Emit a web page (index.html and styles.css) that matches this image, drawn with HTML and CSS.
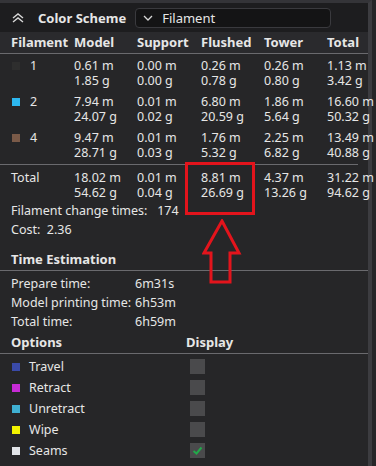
FILE: index.html
```html
<!DOCTYPE html>
<html lang="en">
<head>
  <meta charset="UTF-8" />
  <title>Color Scheme</title>
  <link rel="stylesheet" href="styles.css">
</head>
<body>
  <div class="panel">
    <div class="topbar">
      <svg class="collapse" width="12" height="10" viewBox="0 0 12 10">
        <path d="M1 5 L6 1 L11 5 M1 9 L6 5 L11 9" fill="none" stroke="#d8d8d8" stroke-width="1.4"/>
      </svg>
      <span class="title">Color Scheme</span>
      <div class="dropdown">
        <svg width="10" height="6" viewBox="0 0 10 6">
          <path d="M1 1 L5 5 L9 1" fill="none" stroke="#d8d8d8" stroke-width="1.3"/>
        </svg>
        <span>Filament</span>
      </div>
    </div>

    <div class="grid head">
      <span>Filament</span><span>Model</span><span>Support</span><span>Flushed</span><span>Tower</span><span>Total</span>
    </div>

    <div class="rows">
      <div class="grid row">
        <span class="fil"><i class="sw" style="background:#2e2e2e"></i>1</span>
        <span>0.61 m<br>1.85 g</span><span>0.00 m<br>0.00 g</span><span>0.26 m<br>0.78 g</span><span>0.26 m<br>0.80 g</span><span>1.13 m<br>3.42 g</span>
      </div>
      <div class="grid row">
        <span class="fil"><i class="sw" style="background:#2db7ef"></i>2</span>
        <span>7.94 m<br>24.07 g</span><span>0.01 m<br>0.02 g</span><span>6.80 m<br>20.59 g</span><span>1.86 m<br>5.64 g</span><span>16.60 m<br>50.32 g</span>
      </div>
      <div class="grid row">
        <span class="fil"><i class="sw" style="background:#7a5a48"></i>4</span>
        <span>9.47 m<br>28.71 g</span><span>0.01 m<br>0.03 g</span><span>1.76 m<br>5.32 g</span><span>2.25 m<br>6.82 g</span><span>13.49 m<br>40.88 g</span>
      </div>
    </div>

    <div class="grid row total">
      <span>Total</span>
      <span>18.02 m<br>54.62 g</span><span>0.01 m<br>0.04 g</span><span>8.81 m<br>26.69 g</span><span>4.37 m<br>13.26 g</span><span>31.22 m<br>94.62 g</span>
    </div>

    <div class="info">
      <p>Filament change times:&nbsp;&nbsp; 174</p>
      <p>Cost:&nbsp;&nbsp;2.36</p>
    </div>

    <div class="section">Time Estimation</div>
    <div class="times">
      <p><span>Prepare time:</span><span>6m31s</span></p>
      <p><span>Model printing time:</span><span>6h53m</span></p>
      <p><span>Total time:</span><span>6h59m</span></p>
    </div>

    <div class="section opts-head"><span>Options</span><span>Display</span></div>
    <div class="options">
      <div class="opt"><span class="lbl"><i class="sw" style="background:#3a4aa8"></i>Travel</span><span class="box"></span></div>
      <div class="opt"><span class="lbl"><i class="sw" style="background:#c72bd6"></i>Retract</span><span class="box"></span></div>
      <div class="opt"><span class="lbl"><i class="sw" style="background:#3fb0d2"></i>Unretract</span><span class="box"></span></div>
      <div class="opt"><span class="lbl"><i class="sw" style="background:#f2f200"></i>Wipe</span><span class="box"></span></div>
      <div class="opt"><span class="lbl"><i class="sw" style="background:#e2e4e8"></i>Seams</span>
        <span class="box">
          <svg width="15" height="15" viewBox="0 0 15 15"><path d="M3.5 8 L6.5 10.5 L11.5 4.5" fill="none" stroke="#22a84a" stroke-width="2"/></svg>
        </span>
      </div>
    </div>

    <div class="mark"></div>
    <svg class="arrow" width="40" height="66" viewBox="0 0 40 66">
      <path d="M20 2 L37 34 L28 34 L28 63 L9 63 L9 34 L2 34 Z" fill="none" stroke="#e3141c" stroke-width="3" stroke-linejoin="miter"/>
    </svg>
  </div>
</body>
</html>
```

FILE: styles.css
```css
body {
  margin: 0;
  background: #262628;
  font-family: 'Noto Sans', sans-serif;
  font-size: 12.5px;
  color: #e6e6e6;
  overflow: hidden;
}

p {
  margin: 0;
}

.panel {
  position: relative;
  width: 372px;
  height: 466px;
  background: #262628;
  border-top: 3px solid #343438;
  border-right: 4px solid #3c3c40;
  box-sizing: border-box;
}

.topbar {
  display: flex;
  align-items: center;
  height: 29px;
  background: #1d1d1f;
  padding-left: 12px;
}

.collapse {
  margin-right: 14px;
}

.title {
  font-weight: bold;
  font-size: 13px;
  margin-right: 9px;
}

.dropdown {
  display: flex;
  align-items: center;
  width: 196px;
  height: 20px;
  background: #141415;
  border: 1px solid #3a3a3e;
  border-radius: 4px;
  padding-left: 7px;
  box-sizing: border-box;
  font-size: 13px;
}

.dropdown svg {
  margin-right: 9px;
}

.grid {
  display: grid;
  grid-template-columns: 63px 63px 64px 63px 63px auto;
  padding-left: 11px;
}

.head {
  height: 21px;
  line-height: 21px;
  background: #2a2a2d;
  font-weight: bold;
  font-size: 13px;
  border-bottom: 1px solid #6a6a6e;
}

.rows {
  display: flex;
  flex-direction: column;
  gap: 6px;
  padding-top: 4px;
  padding-bottom: 4px;
  border-bottom: 1px solid #6a6a6e;
  margin-right: 10px;
}

.row {
  line-height: 15px;
  white-space: nowrap;
}

.fil {
  display: flex;
  align-items: flex-start;
}

.sw {
  display: inline-block;
  width: 8px;
  height: 8px;
  margin: 4px 10px 0 1px;
}

.total {
  padding-top: 5px;
}

.info {
  padding: 1px 11px 0;
  line-height: 19px;
}

.section {
  font-weight: bold;
  font-size: 13px;
  padding: 9px 11px 0;
  height: 22px;
  line-height: 22px;
  border-bottom: 1px solid #6a6a6e;
}

.times {
  padding: 3px 11px 0;
  line-height: 19px;
}

.times p {
  display: grid;
  grid-template-columns: 124px auto;
}

.opts-head {
  display: grid;
  grid-template-columns: 175px auto;
  padding-top: 0;
}

.options {
  padding: 2px 11px;
}

.opt {
  display: grid;
  grid-template-columns: 179px auto;
  align-items: center;
  height: 21px;
}

.lbl {
  display: flex;
  align-items: center;
}

.lbl .sw {
  margin: 0 9px 0 1px;
}

.box {
  width: 15px;
  height: 15px;
  background: #4a4a4c;
}

.box svg {
  display: block;
}

.mark {
  position: absolute;
  left: 185px;
  top: 159px;
  width: 64px;
  height: 47px;
  border: 3px solid #e3141c;
}

.arrow {
  position: absolute;
  left: 202px;
  top: 216px;
}
```
